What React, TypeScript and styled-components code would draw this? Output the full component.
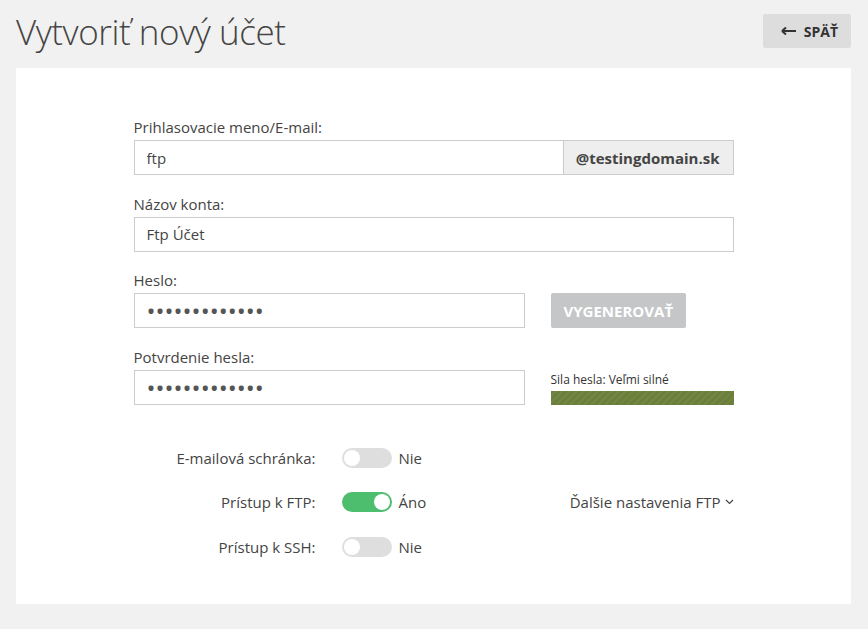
import React from "react";
import styled, { createGlobalStyle } from "styled-components";

const GlobalStyle = createGlobalStyle`
  * { box-sizing: border-box; }
  body {
    margin: 0;
    background: #f1f1f1;
    font-family: "Open Sans", "Noto Sans", sans-serif;
    color: #444;
  }
`;

const Page = styled.div`
  padding: 0 17px 25px 16px;
`;

const Header = styled.div`
  display: flex;
  align-items: center;
  justify-content: space-between;
  height: 68px;
  padding-bottom: 6px;
`;

const Title = styled.h1`
  margin: 0;
  font-size: 35px;
  font-weight: 300;
  color: #444;
  letter-spacing: -0.45px;
`;

const BackButton = styled.button`
  display: flex;
  align-items: center;
  gap: 7px;
  height: 34px;
  padding: 0 13px 0 18px;
  border: none;
  border-radius: 2px;
  background: #dddddd;
  color: #333;
  font-family: inherit;
  font-size: 14px;
  font-weight: 700;
  cursor: pointer;
`;

const Card = styled.div`
  background: #fff;
  padding: 48px 0 47px;
`;

const Form = styled.div`
  width: 600px;
  margin: 0 auto;
  display: flex;
  flex-direction: column;
  gap: 17.67px;
`;

const Group = styled.div`
  display: flex;
  flex-direction: column;
`;

const Label = styled.label`
  font-size: 15px;
  line-height: 22px;
  margin-bottom: 2px;
  color: #444;
`;

const Row = styled.div`
  display: flex;
  align-items: flex-start;
  gap: 26px;
`;

const InputWrap = styled.div<{ $width?: number }>`
  display: flex;
  height: 35px;
  width: ${(p) => (p.$width ? `${p.$width}px` : "100%")};
  border: 1px solid #cccccc;
  background: #fff;
`;

const Input = styled.input`
  flex: 1;
  min-width: 0;
  border: none;
  outline: none;
  padding: 0 12px;
  font-family: inherit;
  font-size: 15px;
  color: #444;
  background: transparent;
`;

const PasswordInput = styled(Input)`
  font-size: 24px;
  letter-spacing: 0;
  color: #555;
`;

const Addon = styled.span`
  display: flex;
  align-items: center;
  padding: 0 13px 0 12px;
  background: #eeeeee;
  border-left: 1px solid #cccccc;
  font-size: 15px;
  font-weight: 700;
  color: #444;
`;

const GenerateButton = styled.button`
  height: 35px;
  padding: 0 13px;
  border: none;
  border-radius: 2px;
  background: #c4c6c8;
  color: #fff;
  font-family: inherit;
  font-size: 15px;
  font-weight: 700;
`;

const Strength = styled.div`
  display: flex;
  flex-direction: column;
  width: 183px;
  padding-top: 2px;
`;

const StrengthText = styled.span`
  font-size: 12px;
  line-height: 16px;
  color: #333;
  margin-bottom: 3px;
`;

const StrengthBar = styled.div`
  height: 14px;
  background-color: #6b7e3a;
  background-image: repeating-linear-gradient(
    -45deg,
    rgba(255, 255, 255, 0.06) 0 2px,
    transparent 2px 5px
  );
`;

const Switches = styled.div`
  display: flex;
  flex-direction: column;
  gap: 24.75px;
  margin-top: 25px;
`;

const SwitchRow = styled.div`
  display: flex;
  align-items: center;
  height: 20px;
`;

const SwitchLabel = styled.span`
  width: 182px;
  text-align: right;
  font-size: 15px;
  color: #444;
  margin-right: 26px;
`;

const Track = styled.span<{ $on: boolean }>`
  position: relative;
  display: inline-block;
  width: 50px;
  height: 20px;
  border-radius: 10px;
  background: ${(p) => (p.$on ? "#4cbe6e" : "#dedede")};
`;

const Knob = styled.span<{ $on: boolean }>`
  position: absolute;
  top: 2px;
  left: ${(p) => (p.$on ? "32px" : "2px")};
  width: 16px;
  height: 16px;
  border-radius: 50%;
  background: #fff;
`;

const SwitchValue = styled.span`
  margin-left: 7px;
  font-size: 15px;
  color: #444;
`;

const MoreLink = styled.a`
  margin-left: auto;
  display: flex;
  align-items: center;
  gap: 4px;
  font-size: 15px;
  color: #444;
  text-decoration: none;
`;

const Toggle = ({ label, on, extra }: { label: string; on: boolean; extra?: React.ReactNode }) => (
  <SwitchRow>
    <SwitchLabel>{label}</SwitchLabel>
    <Track $on={on}>
      <Knob $on={on} />
    </Track>
    <SwitchValue>{on ? "Áno" : "Nie"}</SwitchValue>
    {extra}
  </SwitchRow>
);

const App = () => {
  return (
    <>
      <GlobalStyle />
      <Page>
        <Header>
          <Title>Vytvoriť nový účet</Title>
          <BackButton>
            <svg width="16" height="10" viewBox="0 0 16 10">
              <path d="M1 5h14M1 5l4-3.5M1 5l4 3.5" stroke="#333" strokeWidth="2" fill="none" />
            </svg>
            SPÄŤ
          </BackButton>
        </Header>
        <Card>
          <Form>
            <Group>
              <Label>Prihlasovacie meno/E-mail:</Label>
              <InputWrap>
                <Input defaultValue="ftp" />
                <Addon>@testingdomain.sk</Addon>
              </InputWrap>
            </Group>
            <Group>
              <Label>Názov konta:</Label>
              <InputWrap>
                <Input defaultValue="Ftp Účet" />
              </InputWrap>
            </Group>
            <Group>
              <Label>Heslo:</Label>
              <Row>
                <InputWrap $width={391}>
                  <PasswordInput type="password" defaultValue="ftpheslo12345" />
                </InputWrap>
                <GenerateButton>VYGENEROVAŤ</GenerateButton>
              </Row>
            </Group>
            <Group>
              <Label>Potvrdenie hesla:</Label>
              <Row>
                <InputWrap $width={391}>
                  <PasswordInput type="password" defaultValue="ftpheslo12345" />
                </InputWrap>
                <Strength>
                  <StrengthText>Sila hesla: Veľmi silné</StrengthText>
                  <StrengthBar />
                </Strength>
              </Row>
            </Group>
            <Switches>
              <Toggle label="E-mailová schránka:" on={false} />
              <Toggle
                label="Prístup k FTP:"
                on={true}
                extra={
                  <MoreLink href="#">
                    Ďalšie nastavenia FTP
                    <svg width="9" height="6" viewBox="0 0 9 6">
                      <path d="M1 1l3.5 3.5L8 1" stroke="#444" strokeWidth="1.2" fill="none" />
                    </svg>
                  </MoreLink>
                }
              />
              <Toggle label="Prístup k SSH:" on={false} />
            </Switches>
          </Form>
        </Card>
      </Page>
    </>
  );
};

export default App;
